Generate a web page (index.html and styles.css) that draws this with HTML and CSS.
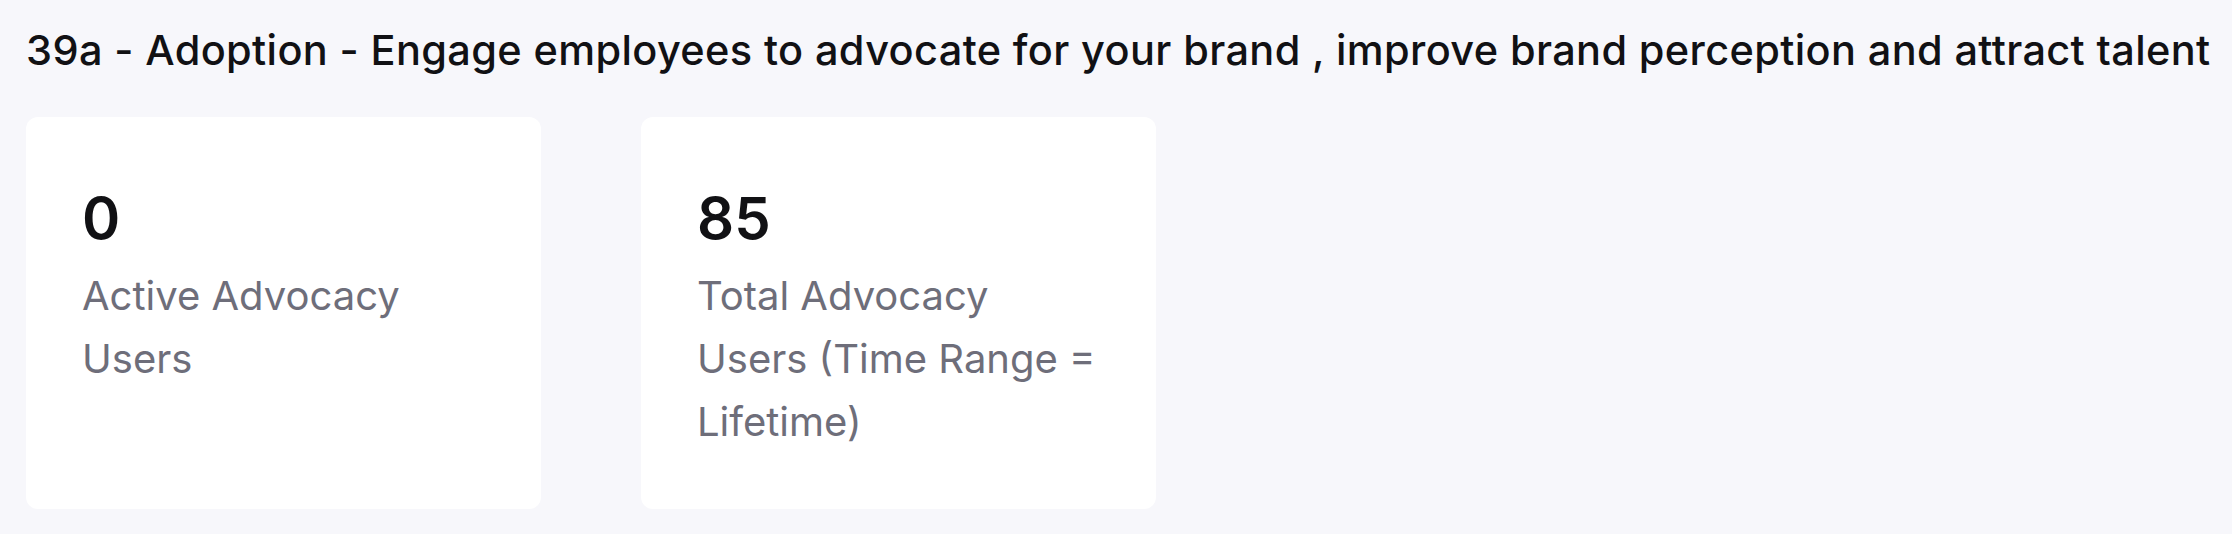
FILE: index.html
```html
<!DOCTYPE html>
<html lang="en">
<head>
    <meta charset="UTF-8">
    <meta name="viewport" content="width=device-width, initial-scale=1.0">
    <link rel="stylesheet" href="styles.css">
    <title>Adoption</title>
</head>
<body>
    <div class="page">
        <h1 class="section-title">39a - Adoption - Engage employees to advocate for your brand , improve brand perception and attract talent</h1>
        <div class="cards">
            <div class="card">
                <div class="card-value">0</div>
                <div class="card-label">Active Advocacy Users</div>
            </div>
            <div class="card">
                <div class="card-value">85</div>
                <div class="card-label">Total Advocacy Users (Time Range = Lifetime)</div>
            </div>
        </div>
    </div>
</body>
</html>
```

FILE: styles.css
```css
body {
    margin: 0;
    background: #f7f7fb;
    font-family: Inter, "Noto Sans", sans-serif;
    color: #111114;
}

.page {
    padding: 26px 26px 0 26px;
}

.section-title {
    margin: 0;
    font-size: 41.5px;
    line-height: 48px;
    font-weight: 500;
    letter-spacing: 0.36px;
    white-space: nowrap;
}

.cards {
    display: flex;
    gap: 100px;
    margin-top: 43px;
}

.card {
    width: 515px;
    box-sizing: border-box;
    background: #ffffff;
    border-radius: 12px;
    padding: 66px 48px 56px 56px;
}

.card-value {
    font-size: 58px;
    line-height: 70px;
    font-weight: 600;
}

.card-label {
    margin-top: 11px;
    font-size: 40px;
    line-height: 63px;
    color: #6e6e7a;
}
```
